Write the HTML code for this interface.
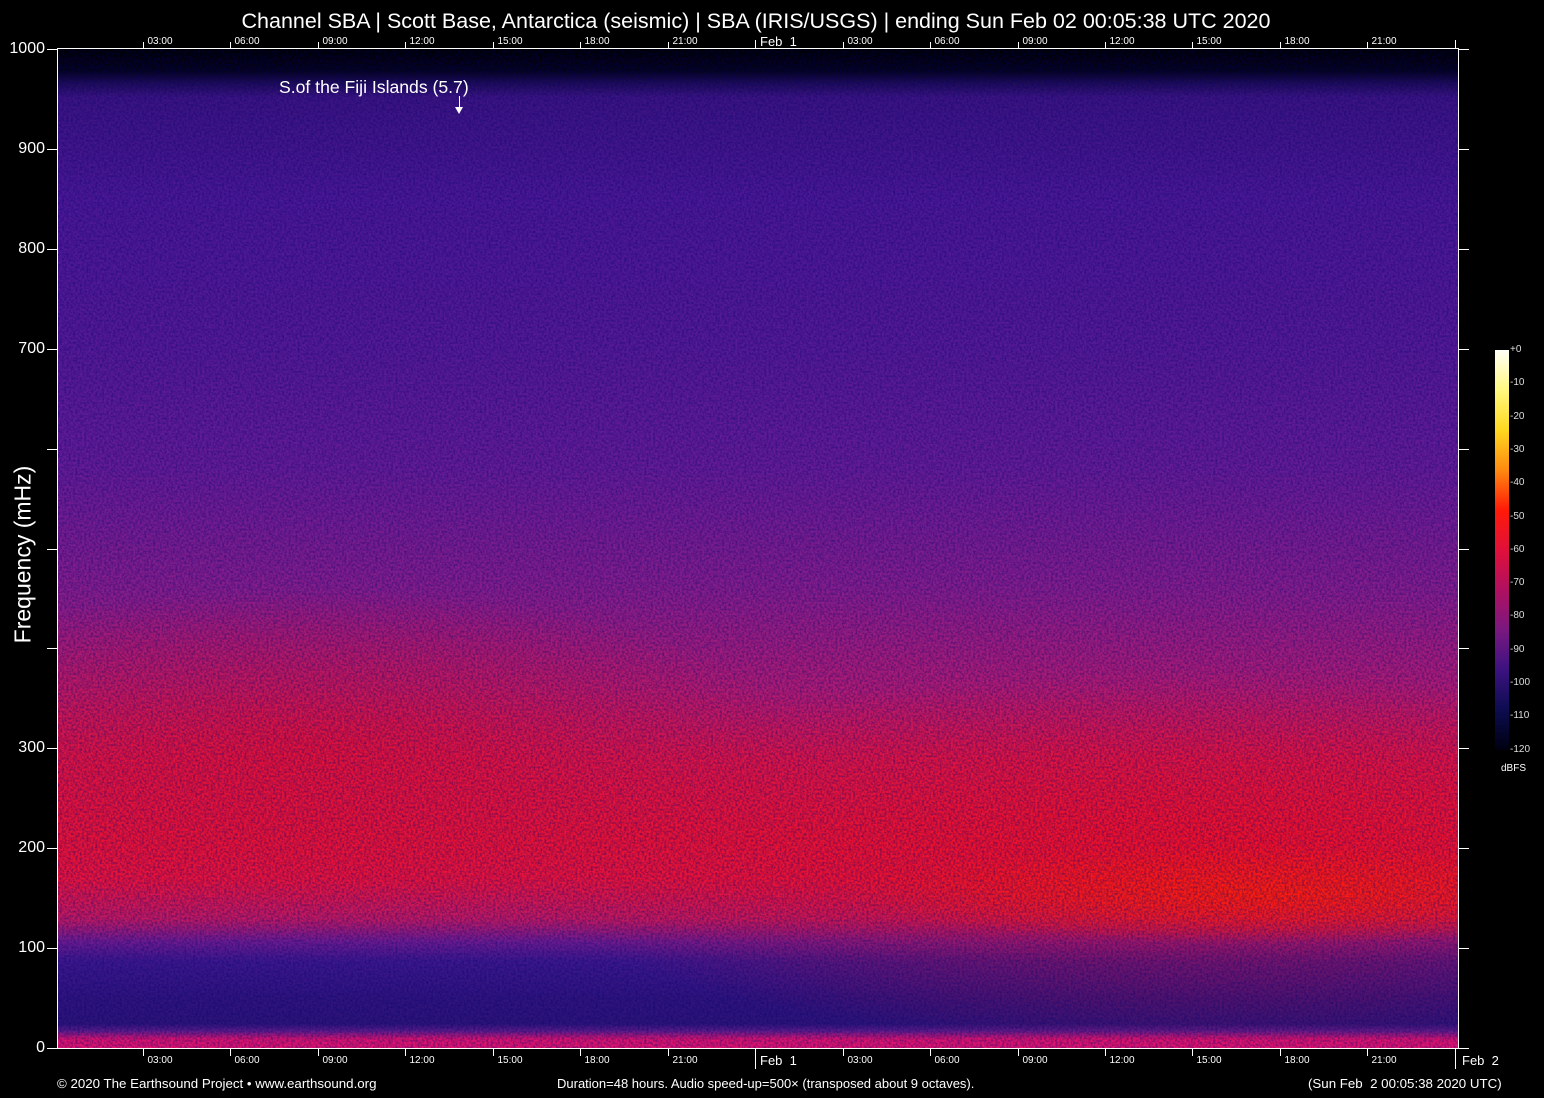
<!DOCTYPE html>
<html><head><meta charset="utf-8"><style>
body{margin:0;background:#000;width:1544px;height:1098px;overflow:hidden;position:relative;font-family:"Liberation Sans",sans-serif;color:#fff}
.a{position:absolute}
#plot{position:absolute;left:58px;top:49px;width:1400px;height:999px;
background:
radial-gradient(ellipse 420px 50px at 1200px 845px,rgba(255,30,10,.95),rgba(255,20,10,0) 100%),
radial-gradient(ellipse 700px 190px at 1150px 810px,rgba(245,15,30,.65),rgba(240,15,30,0) 100%),
radial-gradient(ellipse 500px 160px at 250px 700px,rgba(235,15,40,.6),rgba(230,15,40,0) 100%),
linear-gradient(#000 0px,#05031a 22px,#1e0c55 34px,#3c1480 48px,#4c1894 150px,#561a94 300px,#661c94 420px,#861e8a 540px,#b01c72 640px,#d8164c 710px,#e81438 790px,#e8143c 830px,#c01a60 870px,#701c8e 892px,#3e188c 912px,#30147c 950px,#2e1478 975px,#5e1c88 982px,#d8146e 990px,#e0146e 999px);}
#plot svg{position:absolute;left:0;top:0}
.ty{position:absolute;font-size:16px;width:42px;text-align:right;left:3px}
.tk{position:absolute;background:#fff}
.tx{position:absolute;font-size:10px;width:40px;text-align:center}
</style></head><body>
<div class="a" style="left:0;width:1512px;top:9px;text-align:center;font-size:21.5px">Channel SBA | Scott Base, Antarctica (seismic) | SBA (IRIS/USGS) | ending Sun Feb 02 00:05:38 UTC 2020</div>
<div id="plot"><svg width="1400" height="999"><filter id="n" x="0" y="0" width="100%" height="100%"><feTurbulence type="fractalNoise" baseFrequency="0.45" numOctaves="2" seed="3"/><feColorMatrix type="matrix" values="0 0 0 0 0  0 0 0 0 0  0 0 0 0 0.15  -2.2 0 0 0 1.45"/></filter><rect width="1400" height="999" filter="url(#n)" opacity="0.42"/></svg></div>
<div class="tk" style="left:57px;top:49px;width:1px;height:1000px"></div>
<div class="tk" style="left:1458px;top:49px;width:1px;height:1000px"></div>
<div class="tk" style="left:57px;top:48px;width:1402px;height:1px"></div>
<div class="tk" style="left:57px;top:1048px;width:1402px;height:1px"></div>
<div class="a" style="left:279px;top:77px;font-size:17.6px">S.of the Fiji Islands (5.7)</div>
<div class="tk" style="left:459px;top:96px;width:1px;height:12px"></div>
<div class="a" style="left:455px;top:107px;width:0;height:0;border-left:4px solid transparent;border-right:4px solid transparent;border-top:7px solid #fff"></div>
<div class="a" style="left:-82px;top:541px;width:210px;text-align:center;font-size:23px;transform:rotate(-90deg)">Frequency (mHz)</div>
<div id="ax"></div>
<div class="a" style="left:1495px;top:350px;width:14px;height:400px;background:linear-gradient(#fffff8,#fff880 10%,#ffd820 20%,#ff8a10 30%,#ff1a08 40%,#e0103a 50%,#b01060 60%,#7a1880 70%,#3c1280 80%,#0c0c50 90%,#000010)"></div>
<div id="cb"></div>
<div class="a" style="left:1501px;top:763px;font-size:10px">dBFS</div>
<div class="a" style="left:57px;top:1076px;font-size:13.3px">© 2020 The Earthsound Project • www.earthsound.org</div>
<div class="a" style="left:557px;top:1076px;font-size:13px">Duration=48 hours. Audio speed-up=500× (transposed about 9 octaves).</div>
<div class="a" style="left:1308px;top:1076px;font-size:13.3px">(Sun Feb &nbsp;2 00:05:38 2020 UTC)</div>
<div class="a" style="left:760px;top:34px;font-size:13px">Feb &nbsp;1</div>
<div class="a" style="left:760px;top:1053px;font-size:13px">Feb &nbsp;1</div>
<div class="a" style="left:1462px;top:1053px;font-size:13px">Feb &nbsp;2</div>
<script>
var h='';
var yl={1000:1,900:1,800:1,700:1,300:1,200:1,100:1,0:1};
for(var v=0;v<=1000;v+=100){var y=1048-v*0.999;
h+='<div class="tk" style="left:47px;top:'+y+'px;width:10px;height:1px"></div>';
h+='<div class="tk" style="left:1459px;top:'+y+'px;width:10px;height:1px"></div>';
if(yl[v])h+='<div class="ty" style="top:'+(y-9)+'px">'+v+'</div>';}
var L=['03:00','06:00','09:00','12:00','15:00','18:00','21:00','','03:00','06:00','09:00','12:00','15:00','18:00','21:00',''];
for(var i=0;i<16;i++){var x=Math.round(143+i*87.45);
var big=(i==7||i==15);
h+='<div class="tk" style="left:'+x+'px;top:'+(big?40:42)+'px;width:1px;height:'+(big?9:7)+'px"></div>';
h+='<div class="tk" style="left:'+x+'px;top:1049px;width:1px;height:'+(big?20:7)+'px"></div>';
if(L[i]){h+='<div class="tx" style="left:'+(x-3)+'px;top:36px">'+L[i]+'</div>';
h+='<div class="tx" style="left:'+(x-3)+'px;top:1055px">'+L[i]+'</div>';}}
document.getElementById('ax').innerHTML=h;
var c='';
for(var k=0;k<=12;k++){var y=350+k*33.3;
c+='<div class="a" style="left:1510px;top:'+(y-6)+'px;font-size:10px;color:#ddd">'+(k==0?'+0':'-'+k*10)+'</div>';}
document.getElementById('cb').innerHTML=c;
</script>
</body></html>
